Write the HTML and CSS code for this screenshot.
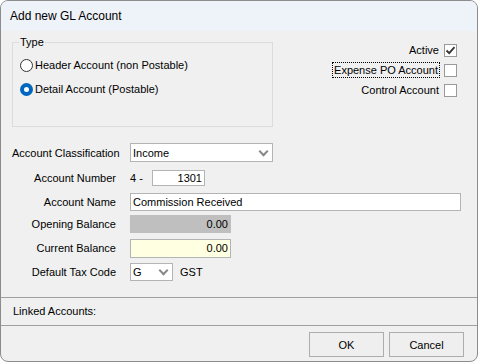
FILE: index.html
```html
<!DOCTYPE html>
<html lang="en">
<head>
    <meta charset="utf-8">
    <meta name="viewport" content="width=device-width, initial-scale=1.0">
    <title>Add new GL Account</title>
    <link rel="stylesheet" href="styles.css">
</head>
<body>
    <div class="window">
        <div class="titlebar">Add new GL Account</div>

        <div class="content">
            <div class="top">
                <fieldset class="group">
                    <legend>Type</legend>
                    <div class="radio-row"><span class="radio"></span>Header Account (non Postable)</div>
                    <div class="radio-row"><span class="radio checked"></span>Detail Account (Postable)</div>
                </fieldset>

                <div class="checks">
                    <div class="check-row"><span>Active</span><span class="box">
                        <svg width="11" height="11" viewBox="0 0 11 11"><path d="M1.5 5.5 L4.2 8.2 L9.5 2.2" fill="none" stroke="#333" stroke-width="1.8"/></svg>
                    </span></div>
                    <div class="check-row"><span class="focus">Expense PO Account</span><span class="box"></span></div>
                    <div class="check-row"><span>Control Account</span><span class="box"></span></div>
                </div>
            </div>

            <div class="form">
                <div class="label">Account Classification</div>
                <div class="ctrl"><div class="field select wide">Income<span class="chev"></span></div></div>

                <div class="label">Account Number</div>
                <div class="ctrl"><span class="prefix">4 -</span><div class="field number">1301</div></div>

                <div class="label">Account Name</div>
                <div class="ctrl"><div class="field name">Commission Received</div></div>

                <div class="label">Opening Balance</div>
                <div class="ctrl"><div class="field money disabled">0.00</div></div>

                <div class="label">Current Balance</div>
                <div class="ctrl"><div class="field money current">0.00</div></div>

                <div class="label">Default Tax Code</div>
                <div class="ctrl"><div class="field select tax">G<span class="chev"></span></div><span class="suffix">GST</span></div>
            </div>
        </div>

        <div class="linked">Linked Accounts:</div>

        <div class="footer">
            <button class="btn">OK</button>
            <button class="btn">Cancel</button>
        </div>
    </div>
</body>
</html>
```

FILE: styles.css
```css
body {
    margin: 0;
    background: #ffffff;
    font-family: "Liberation Sans", Arial, sans-serif;
    font-size: 11px;
    color: #000;
}
.window {
    box-sizing: border-box;
    width: 478px;
    height: 362px;
    border: 1px solid #8c8c8c;
    border-radius: 8px;
    background: #f0f0f0;
    overflow: hidden;
    display: flex;
    flex-direction: column;
}
.titlebar {
    height: 30px;
    line-height: 30px;
    padding-left: 9px;
    background: #eef2f9;
    font-size: 12px;
}
.content {
    padding: 5px 20px 0 11px;
}
.top {
    display: flex;
    justify-content: space-between;
}
.group {
    box-sizing: border-box;
    width: 261px;
    height: 91px;
    margin: 0;
    padding: 4px 0 0 6px;
    border: 1px solid #dcdcdc;
}
.group legend {
    padding: 0 1px;
    line-height: 13px;
}
.radio-row {
    display: flex;
    align-items: center;
    height: 24px;
    padding-left: 1px;
}
.radio {
    box-sizing: border-box;
    width: 13px;
    height: 13px;
    margin-right: 2px;
    border: 1px solid #333;
    border-radius: 50%;
    background: #fff;
}
.radio.checked {
    border: 4px solid #0067c0;
    background: #fff;
}
.checks {
    padding-top: 4px;
}
.check-row {
    display: flex;
    align-items: center;
    justify-content: flex-end;
    height: 20px;
}
.box {
    box-sizing: border-box;
    width: 13px;
    height: 13px;
    margin-left: 5px;
    border: 1px solid #999;
    background: #fff;
    display: flex;
    align-items: center;
    justify-content: center;
}
.focus {
    outline: 1px dotted #000;
    outline-offset: 1px;
    margin-right: 1px;
}
.form {
    margin-top: 13px;
    display: grid;
    grid-template-columns: 104px 1fr;
    grid-template-rows: 25px 26px 21px 24px 24px 24px;
    column-gap: 14px;
}
.label {
    text-align: right;
    align-self: center;
    white-space: nowrap;
}
.ctrl {
    display: flex;
    align-items: center;
}
.field {
    box-sizing: border-box;
    height: 18px;
    line-height: 16px;
    padding: 0 2px;
    border: 1px solid #b4b4b4;
    background: #fff;
    white-space: nowrap;
}
.select {
    display: flex;
    justify-content: space-between;
    align-items: center;
    height: 19px;
}
.wide {
    width: 143px;
}
.tax {
    width: 43px;
    height: 18px;
}
.chev {
    width: 5px;
    height: 5px;
    margin: -3px 3px 0 0;
    border-right: 2px solid #888;
    border-bottom: 2px solid #888;
    transform: rotate(45deg);
}
.prefix {
    width: 22px;
}
.number {
    width: 53px;
    height: 16px;
    line-height: 14px;
    text-align: right;
}
.name {
    width: 331px;
}
.money {
    width: 101px;
    text-align: right;
}
.disabled {
    background: #bfbfbf;
    border-color: #bfbfbf;
}
.current {
    height: 19px;
    background: #ffffe1;
}
.suffix {
    margin-left: 7px;
}
.linked {
    margin-top: auto;
    height: 27px;
    line-height: 27px;
    padding-left: 12px;
    border-top: 1px solid #a0a0a0;
    border-bottom: 1px solid #a0a0a0;
}
.footer {
    height: 35px;
    display: flex;
    justify-content: flex-end;
    gap: 5px;
    padding: 6px 13px 0 0;
    box-sizing: border-box;
}
.btn {
    width: 75px;
    height: 25px;
    border: 1px solid #adadad;
    background: #efefef;
    font-family: "Liberation Sans", Arial, sans-serif;
    font-size: 11px;
    color: #000;
    padding: 0;
}
```
